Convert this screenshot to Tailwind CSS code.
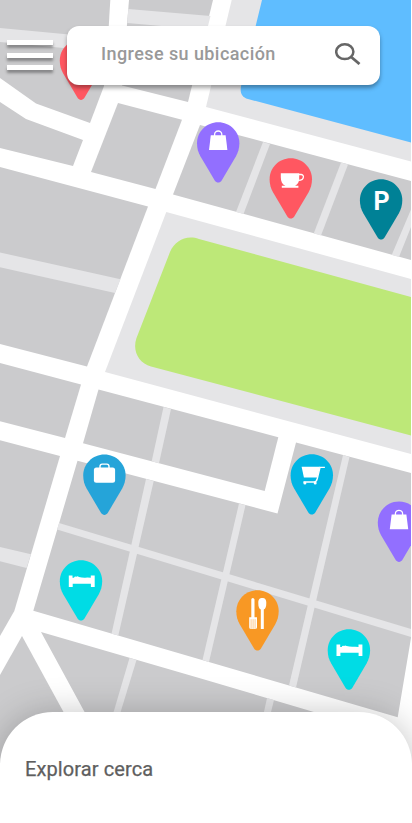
<!DOCTYPE html>
<html lang="es">
<head>
<meta charset="utf-8">
<meta name="viewport" content="width=device-width, initial-scale=1">
<title>Mapa</title>
<script src="https://cdn.jsdelivr.net/npm/@tailwindcss/browser@4"></script>
</head>
<body class="bg-white font-['Roboto',sans-serif]">
<main class="relative flex h-[823px] w-full flex-col justify-between overflow-hidden">
  <svg class="absolute left-0 top-0" width="411" height="823" viewBox="0 0 411 823" aria-hidden="true">
    <defs>
      <path id="pin" d="M21.2 0C33 0 42.4 9.4 42.4 21C42.4 26 41 30 39 34L24.5 58.6C23 61 19.4 61 17.9 58.6L3.4 34C1.2 30 0 26 0 21C0 9.4 9.4 0 21.2 0Z"/>
      <g id="bag"><path fill="#fff" d="M13.800 13H28.600L30.400 27.800H12Z"/><path fill="none" stroke="#fff" stroke-width="1.300" d="M17.600 14V12.200a3.600 3.400 0 0 1 7.200 0V14"/></g>
      <path id="bed" fill="#fff" d="M9 15.200h3.700v2.400h1.500q.6-1.700 2.400-1q1.200-.9 2.500.1q3 .9 6.200.8q3-.2 5.700.1v-2.400h3.900v11.600h-3.800v-3.300H12.900v3.300H9Z"/>
    </defs>
    <!-- City blocks -->
    <g fill="#cbcbcd">
      <path d="M0 0H110.300L108.500 30L104 86L90 123L36 103.500L0 78Z"/>
      <path d="M0 102L26 119L83 140L73 166L0 148Z"/>
      <path d="M118 103L182 119.800L155.500 189L91 172Z"/>
      <path d="M129 0H213L188 102L122 85.500Z"/>
      <path d="M200 125L411 181V260L173 194.500Z"/>
      <path d="M0 167L148 206.500L87 366.500L0 344Z"/>
      <path d="M0 363L81 384.500L65 438L0 421.200Z"/>
      <path d="M98.500 389.500L278.300 437.300L264.700 491L83 443.200Z"/>
      <path d="M0 440.300L60 456L14.300 611L0 636Z"/>
      <path d="M77.500 460.700L277.500 513.500L296 442.500L411 473V638L397.700 717.200L33.300 610.800Z"/>
      <path d="M41 632L206 680L313 711.800L380 731V823H145Z"/>
      <path d="M22 636L63.500 712L120 823H0V675Z"/>
    </g>
    <g fill="#e5e5e7">
      <path d="M231.700 0L206 107L411 161.500V0Z"/>
      <path d="M166.300 212L411 279V454L105 372Z"/>
      <path d="M0 28L106.500 38V52L0 42Z"/>
      <path d="M128.300 9L210.500 16L207 30L127.300 23Z"/>
      <path d="M263 142L270 144L243.500 214L236 212Z"/>
      <path d="M341 162.500L348 164.500L321 235.500L313.700 233.500Z"/>
      <path d="M411 209.500V227L399 257L391.700 255Z"/>
      <path d="M0 252.500L120.500 279.300L115 293L0 267.300Z"/>
      <path d="M163.500 407L171 409L159 463.300L151.700 461.200Z"/>
      <path d="M0 547L31 554.200L26.500 568L0 561.200Z"/>
      <path d="M59 523L411 629V637L57 529.500Z"/>
      <path d="M146 479L153.700 481L118.300 635.600L111.500 633.700Z"/>
      <path d="M239 503.500L245.500 505.200L209 662L202.500 660Z"/>
      <path d="M343 455L349.500 457L296 687.500L289 685.500Z"/>
      <path d="M129.500 658L136.500 660L120 714H113Z"/>
      <path d="M267 698L274 700L270.500 714H263.500Z"/>
    </g>
    <path fill="#5fbdff" d="M262 0L241.500 84C239.500 92 241 97 248 99L411 142.500V0Z"/>
    <path fill="#bde878" d="M199 239L411 297V435.500L151 366.500C139 363 132 351 136.500 338L170 252C175 241 186 234.500 199 239Z"/>
    <!-- Places -->
    <use href="#pin" x="59.800" y="39.500" fill="#ff5761"/>
    <g transform="translate(197 122.200)"><use href="#pin" fill="#926fff"/><use href="#bag"/></g>
    <g transform="translate(269.600 158.200)"><use href="#pin" fill="#ff5761"/><path fill="#fff" d="M11.200 15H29.600V20.500C29.600 24 28 26 25.500 27.600H28.800V29.600H12.200V27.600H15.800C12.500 26 11.200 23 11.200 19Z"/><path fill="none" stroke="#fff" stroke-width="1.300" d="M29 16.300h2.600a2.200 2.200 0 0 1 2.200 2.300c0 2.300-2 3.600-5.200 3.600"/></g>
    <g transform="translate(359.900 179.200)"><use href="#pin" fill="#008196"/><text x="21.700" y="30.800" text-anchor="middle" fill="#fff" class="font-['Roboto',sans-serif] text-[25px] font-bold">P</text></g>
    <g transform="translate(83.200 454.500)"><use href="#pin" fill="#25a4d9"/><rect x="10.700" y="13" width="21.200" height="15.300" rx="2.500" fill="#fff"/><path fill="none" stroke="#fff" stroke-width="1.400" d="M16.800 14V11.800q0-2.200 2.200-2.200h4.600q2.200 0 2.200 2.200V14"/></g>
    <g transform="translate(59.800 560.200)"><use href="#pin" fill="#00dce5"/><use href="#bed"/></g>
    <g transform="translate(290.600 454.200)"><use href="#pin" fill="#00b6e5"/><path fill="#fff" d="M11 12.500H29.400L26.800 23.300H13.300Z"/><path fill="none" stroke="#fff" stroke-width="1.400" d="M34.300 13.200H29.400L26.700 24.500Q26 27.800 23 27.800H12.800"/><circle cx="14.300" cy="28.900" r="1.500" fill="#fff"/><circle cx="24.600" cy="28.900" r="1.500" fill="#fff"/></g>
    <g transform="translate(377.800 501.500)"><use href="#pin" fill="#926fff"/><use href="#bag"/></g>
    <g transform="translate(236.300 590.200)"><use href="#pin" fill="#f89824"/><path fill="#fff" d="M15 9.200q0-1.500 1.500-1.500t1.700 1.500V27h2.500v10q0 1.700-1.500 1.700h-4.800q-1.500 0-1.500-1.700V27H15Z"/><path stroke="#f89824" stroke-width=".5" d="M14.800 29v9.700M16.800 29v9.700M18.800 29v9.700"/><path fill="#fff" d="M22 12.500C22 9 23.500 7.700 26 7.700S30 9 30 12.500C30 16.500 29.300 18.500 27.500 19.300V38.700H24.500V19.300C22.700 18.500 22 16.500 22 12.500Z"/></g>
    <g transform="translate(327.700 629.300)"><use href="#pin" fill="#00dce5"/><use href="#bed" x="-.2"/></g>
  </svg>

  <header class="relative flex items-start pl-[7px] pt-[26px]">
    <button class="mt-[14px] flex w-[46px] flex-col gap-[7.500px]" aria-label="Menú">
      <span class="h-[5px] w-full bg-white shadow-[0_3px_3px_rgba(0,0,0,0.35)]"></span>
      <span class="h-[5px] w-full bg-white shadow-[0_3px_3px_rgba(0,0,0,0.35)]"></span>
      <span class="h-[5px] w-full bg-white shadow-[0_3px_3px_rgba(0,0,0,0.35)]"></span>
    </button>
    <div class="ml-[13.500px] flex h-[59px] w-[313px] items-center justify-between rounded-[12px] bg-white pl-[34.500px] pr-[18.500px] shadow-[0_3px_4px_rgba(0,0,0,0.35)]">
      <span class="-mt-[4px] whitespace-nowrap text-[18px] font-medium tracking-[0.42px] text-[#999]">Ingrese su ubicación</span>
      <svg class="-mt-[3px]" width="26" height="22" viewBox="0 0 26 22" fill="none" stroke="#666" stroke-width="2.500" aria-hidden="true"><ellipse cx="9.800" cy="8.700" rx="8.600" ry="7.400"/><path stroke-width="2.800" d="M16.500 14.200L24.500 21"/></svg>
    </div>
  </header>

  <section class="relative h-[111px] rounded-t-[53px] bg-white pl-[25px] pt-[43px] shadow-[0_3px_36px_rgba(0,0,0,0.26)]">
    <h1 class="text-[20px] font-normal leading-[28px] tracking-[0.1px] text-[#5e5e5e] [-webkit-text-stroke:0.25px_#5e5e5e]">Explorar cerca</h1>
  </section>
</main>
</body>
</html>
